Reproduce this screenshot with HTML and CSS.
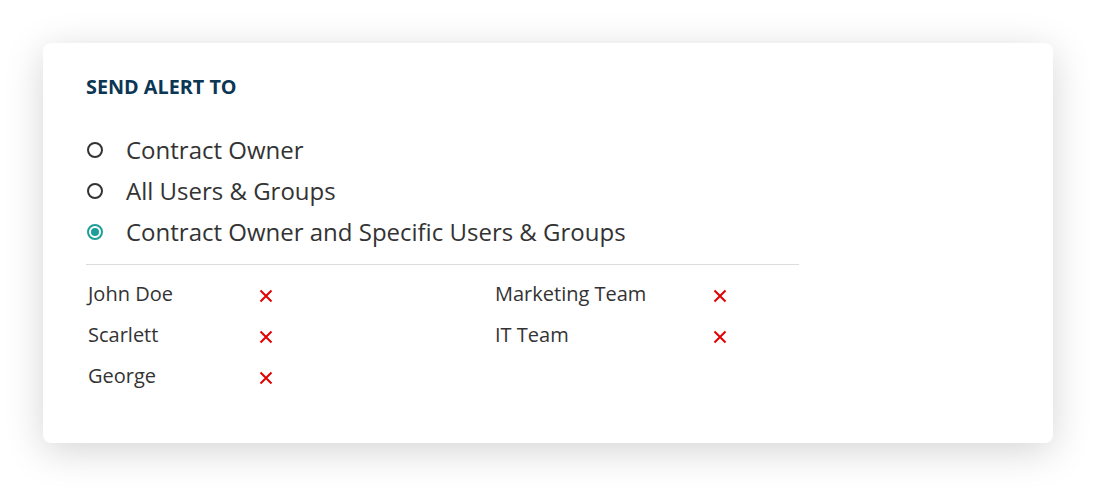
FILE: index.html
```html
<!DOCTYPE html>
<html>
<head>
<meta charset="utf-8">
<link rel="stylesheet" href="styles.css">
</head>
<body>
<div class="card">
  <h2 class="title">SEND ALERT TO</h2>
  <div class="options">
    <label class="option"><span class="radio"></span><span>Contract Owner</span></label>
    <label class="option"><span class="radio"></span><span>All Users &amp; Groups</span></label>
    <label class="option"><span class="radio checked"></span><span>Contract Owner and Specific Users &amp; Groups</span></label>
  </div>
  <div class="divider"></div>
  <div class="list">
    <div class="col col-users">
      <div class="item"><span class="name">John Doe</span><span class="remove"><svg width="14" height="14" viewBox="0 0 14 14"><path d="M1.5 1.5L12.5 12.5M12.5 1.5L1.5 12.5" stroke="#e30000" stroke-width="2"/></svg></span></div>
      <div class="item"><span class="name">Scarlett</span><span class="remove"><svg width="14" height="14" viewBox="0 0 14 14"><path d="M1.5 1.5L12.5 12.5M12.5 1.5L1.5 12.5" stroke="#e30000" stroke-width="2"/></svg></span></div>
      <div class="item"><span class="name">George</span><span class="remove"><svg width="14" height="14" viewBox="0 0 14 14"><path d="M1.5 1.5L12.5 12.5M12.5 1.5L1.5 12.5" stroke="#e30000" stroke-width="2"/></svg></span></div>
    </div>
    <div class="col col-groups">
      <div class="item"><span class="name">Marketing Team</span><span class="remove"><svg width="14" height="14" viewBox="0 0 14 14"><path d="M1.5 1.5L12.5 12.5M12.5 1.5L1.5 12.5" stroke="#e30000" stroke-width="2"/></svg></span></div>
      <div class="item"><span class="name">IT Team</span><span class="remove"><svg width="14" height="14" viewBox="0 0 14 14"><path d="M1.5 1.5L12.5 12.5M12.5 1.5L1.5 12.5" stroke="#e30000" stroke-width="2"/></svg></span></div>
    </div>
  </div>
</div>
</body>
</html>
```
FILE: styles.css
```css
* { box-sizing: border-box; }
html, body { margin: 0; padding: 0; background: #fff; }
body {
  font-family: "Open Sans", "Liberation Sans", sans-serif;
  color: #333;
  padding: 43px 46px 51px 43px;
}
.card {
  background: #fff;
  border-radius: 8px;
  box-shadow: 0 8px 38px rgba(0,0,0,0.17);
  height: 400px;
  padding: 32px 254px 0 43px;
}
.title {
  margin: 0;
  font-size: 19.8px;
  font-weight: 700;
  color: #0b3654;
  line-height: 24px;
}
.options {
  margin-top: 30px;
  display: flex;
  flex-direction: column;
}
.option {
  display: flex;
  align-items: center;
  height: 41px;
  font-size: 24px;
  color: #333;
}
.radio {
  width: 16px;
  height: 16px;
  border: 2px solid #333;
  border-radius: 50%;
  margin: 0 23px 0 1px;
  flex: none;
  display: flex;
  align-items: center;
  justify-content: center;
}
.radio.checked {
  border-color: #1f9d9a;
}
.radio.checked::after {
  content: "";
  width: 8px;
  height: 8px;
  border-radius: 50%;
  background: #1f9d9a;
}
.divider {
  height: 1px;
  background: #ddd;
  margin-top: 11.5px;
}
.list {
  display: grid;
  grid-template-columns: 407px 1fr;
  padding-left: 2px;
  margin-top: 8.5px;
}
.item {
  display: flex;
  align-items: center;
  height: 41px;
  font-size: 20px;
}
.col-users .name { width: 171px; }
.col-groups .name { width: 218px; }
.remove { display: flex; margin-top: 5px; }
```
